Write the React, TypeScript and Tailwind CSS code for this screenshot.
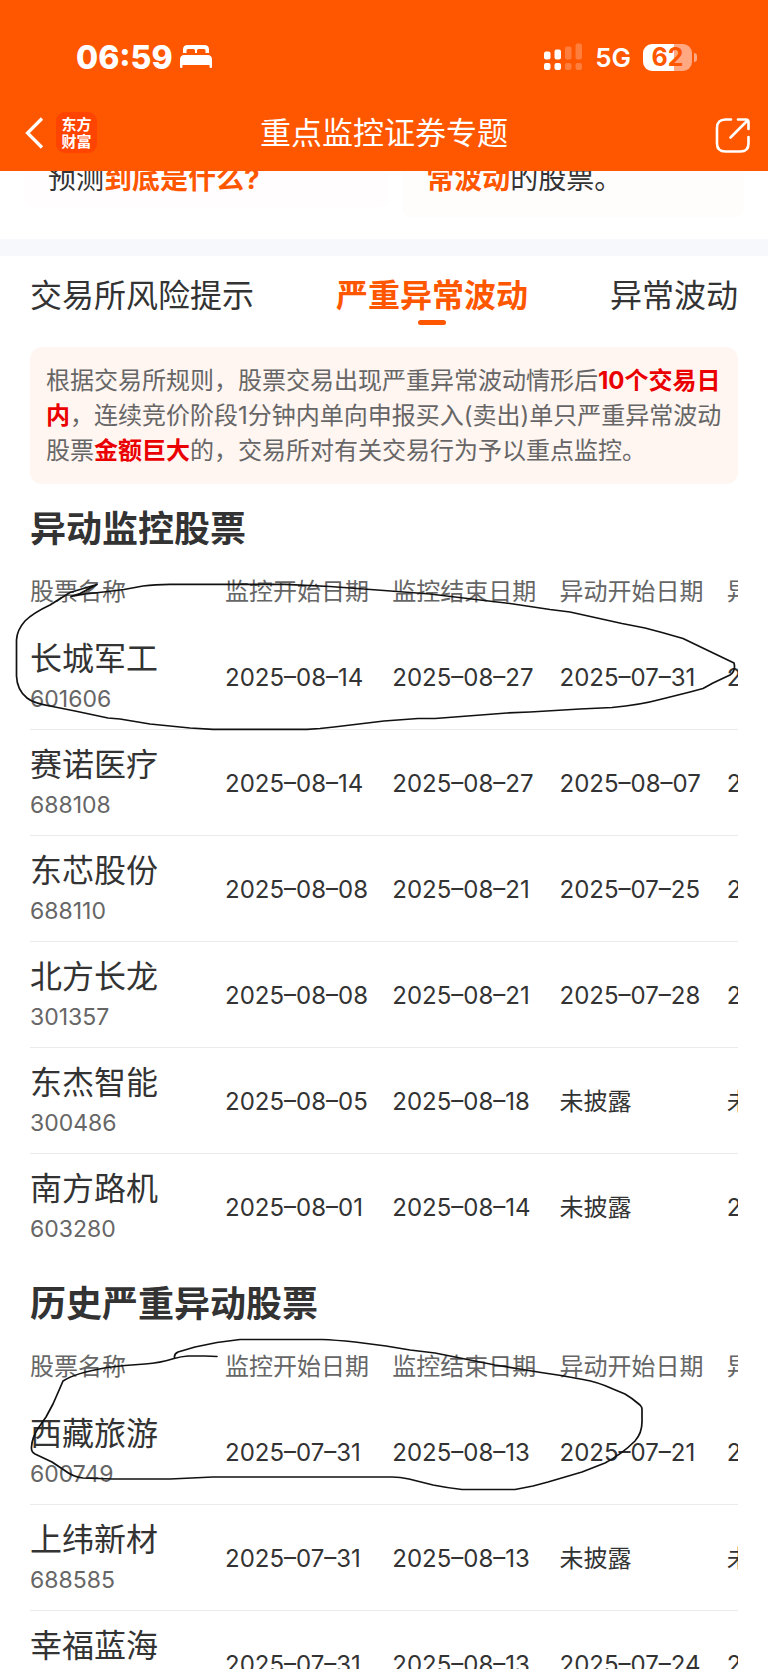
type Stock = {
  name: string;
  code: string;
  dates: [string, string, string, string];
};

const monitored: Stock[] = [
  { name: "长城军工", code: "601606", dates: ["2025–08–14", "2025–08–27", "2025–07–31", "2025–08–13"] },
  { name: "赛诺医疗", code: "688108", dates: ["2025–08–14", "2025–08–27", "2025–08–07", "2025–08–13"] },
  { name: "东芯股份", code: "688110", dates: ["2025–08–08", "2025–08–21", "2025–07–25", "2025–08–07"] },
  { name: "北方长龙", code: "301357", dates: ["2025–08–08", "2025–08–21", "2025–07–28", "2025–08–07"] },
  { name: "东杰智能", code: "300486", dates: ["2025–08–05", "2025–08–18", "未披露", "未披露"] },
  { name: "南方路机", code: "603280", dates: ["2025–08–01", "2025–08–14", "未披露", "2025–07–31"] },
];

const history: Stock[] = [
  { name: "西藏旅游", code: "600749", dates: ["2025–07–31", "2025–08–13", "2025–07–21", "2025–07–30"] },
  { name: "上纬新材", code: "688585", dates: ["2025–07–31", "2025–08–13", "未披露", "未披露"] },
  { name: "幸福蓝海", code: "300528", dates: ["2025–07–31", "2025–08–13", "2025–07–24", "2025–07–30"] },
];

const dateColumns = ["监控开始日期", "监控结束日期", "异动开始日期", "异动结束日期"];

function StatusBar() {
  return (
    <div className="flex h-[114px] items-center justify-between pl-[76px] pr-[71px]">
      <div className="flex items-center gap-1.5">
        <span className="pt-0.5 text-[32px] leading-10 font-extrabold">06:59</span>
        <svg width="34" height="26" viewBox="0 0 34 26" fill="currentColor" aria-hidden="true">
          <path d="M4 9V5.5Q4 1 8.500 1H25.500Q30 1 30 5.500V9H26.500V6.500Q26.500 5 25 5H19.500Q18 5 18 6.500V9H16V6.500Q16 5 14.500 5H9Q7.500 5 7.500 6.500V9Z" />
          <path d="M1 15.500Q1 11 5.500 11H28.500Q33 11 33 15.500V23Q33 24 32 24H31.500Q30.500 24 30.500 23V21H3.500V23Q3.500 24 2.500 24H2Q1 24 1 23Z" />
        </svg>
      </div>
      <div className="flex items-center gap-3">
        <svg width="39" height="28" viewBox="0 0 39 28" fill="currentColor" aria-hidden="true">
          <rect x="0" y="8.500" width="6.500" height="8" rx="2" />
          <rect x="10.500" y="6.500" width="6.500" height="10" rx="2" />
          <rect x="0" y="20" width="6.500" height="7" rx="2" />
          <rect x="10.500" y="20" width="6.500" height="7" rx="2" />
          <g opacity="0.24">
            <rect x="21" y="3.500" width="6.500" height="13" rx="2" />
            <rect x="31.500" y="0.500" width="6.500" height="16" rx="2" />
            <rect x="21" y="20" width="6.500" height="7" rx="2" />
            <rect x="31.500" y="20" width="6.500" height="7" rx="2" />
          </g>
        </svg>
        <span className="pt-0.5 text-[26px] leading-8 font-semibold">5G</span>
        <div className="flex items-center gap-0.5">
          <div className="flex h-[27px] w-[49px] items-center justify-center rounded-[9px] bg-linear-to-r from-white from-63% to-[#ffa882] to-63% text-[25px] leading-7 font-bold text-[#ff5600]">
            62
          </div>
          <div className="h-[9px] w-[3px] rounded-r-full bg-[#ffa882]" />
        </div>
      </div>
    </div>
  );
}

function NavBar() {
  return (
    <div className="grid h-[57px] grid-cols-[1fr_auto_1fr] items-start px-4">
      <div className="-mt-0.5 flex items-center gap-2.5 pl-2">
        <button type="button" aria-label="返回" className="py-1">
          <svg width="22" height="32" viewBox="0 0 22 32" fill="none" stroke="currentColor" strokeWidth="3.200" aria-hidden="true">
            <path d="M18 1.500L3.500 16L18 30.500" />
          </svg>
        </button>
        <a
          href="#home"
          className="flex size-[41px] flex-col items-center justify-center rounded-[9px] bg-[#ff4400] text-[15px] leading-[17px] font-bold"
        >
          <span>东方</span>
          <span>财富</span>
        </a>
      </div>
      <h1 className="text-[31px] leading-[38px]">重点监控证券专题</h1>
      <button type="button" aria-label="分享" className="justify-self-end pt-0.5">
        <svg width="38" height="38" viewBox="0 0 38 38" fill="none" stroke="currentColor" strokeWidth="2.600" strokeLinecap="round" aria-hidden="true">
          <path d="M17 3.500H11.500Q3 3.500 3 12V27.500Q3 35.500 11.500 35.500H26.500Q34.500 35.500 34.500 27.500V21" />
          <path d="M24 3.500H32Q34.500 3.500 34.500 6V13M33.500 4.500L16.500 21.500" />
        </svg>
      </button>
    </div>
  );
}

function StockTable({ title, stocks }: { title: string; stocks: Stock[] }) {
  return (
    <section>
      <h2 className="text-4xl leading-12 font-bold text-[#333]">{title}</h2>
      <div className="overflow-hidden">
        <table className="w-[864px] table-fixed border-separate border-spacing-0 text-left" aria-label={title}>
          <thead>
            <tr className="h-[71px] text-2xl text-[#666]">
              <th scope="col" className="w-[195px] pt-1.5 font-normal">
                股票名称
              </th>
              {dateColumns.map((label) => (
                <th key={label} scope="col" className="pt-1.5 font-normal whitespace-nowrap">
                  {label}
                </th>
              ))}
            </tr>
          </thead>
          <tbody>
            {stocks.map((stock) => (
              <tr key={stock.code} className="group h-[106px]">
                <th scope="row" className="border-b border-[#ebebeb] pt-1 font-normal group-last:border-b-0">
                  <div className="text-[32px] leading-10 text-[#333]">{stock.name}</div>
                  <div className="text-[23px] leading-10 text-[#666]">{stock.code}</div>
                </th>
                {stock.dates.map((date, i) => (
                  <td
                    key={dateColumns[i]}
                    className="border-b border-[#ebebeb] pt-0.5 text-2xl whitespace-nowrap text-[#333] group-last:border-b-0"
                  >
                    {date}
                  </td>
                ))}
              </tr>
            ))}
          </tbody>
        </table>
      </div>
    </section>
  );
}

function PenMarks() {
  return (
    <svg
      className="pointer-events-none absolute top-0 left-0"
      width="768"
      height="1669"
      viewBox="0 0 768 1669"
      fill="none"
      stroke="#111"
      strokeWidth="1.700"
      strokeLinejoin="round"
      strokeLinecap="round"
      aria-hidden="true"
    >
      <path d="M71 596.500L80 593.500L97 584.500L85 588L70 592.500L50 605Q33 613 25 621Q17 630 16.500 640V676Q17 690 27 698Q33 703 50 706L75 711L108 718L120 719L150 724L190 728L213 729.300H307L320 728.500L334 727L384 721L418 718.500H435L507 713L530 712L580 709L612 707.500Q640 705 662 699L676 695.500L690 692L703 688.500L713 683L730 675Q736 671 734 663L709 651L683 638.500L662 632.500L645 628L622 623.500L570 612L550 609.500L510 603.500L480 600L430 594L384 590.500L330 586.500L285 584.300H170Q155 584.300 143 586L124 589.500L108 591.500L85 594L71 596.500" />
      <path d="M217 1356.500L205 1356H188Q181 1356.500 174 1358.500Q160 1363 145 1364L125 1365.500L107 1367.500Q75 1373 63 1381L60 1388L53 1404L46 1417L39 1427Q32 1437 31.500 1447Q31 1452 35 1454L52 1462L64 1470Q73 1477 83 1478L113 1479H170L213 1477H392Q400 1477 409 1479L433 1485Q448 1488 462 1489.500H515L533 1486L548 1482L582 1472L605 1463Q622 1454 635 1441Q642 1433 642 1422V1409Q642 1407 640 1405Q632 1398 625 1394L613 1389Q598 1382 583 1379.500L561 1375.500L541 1372.500L495 1365L475 1361L435 1353L410 1350L386 1346L355 1342Q335 1340 322 1339.500H240L217 1342.500L195 1347L178 1352Q174 1354 174.500 1357.500" />
    </svg>
  );
}

export default function App() {
  return (
    <div className="relative flex h-screen flex-col overflow-hidden bg-white font-['Inter','Noto_Sans_CJK_SC',sans-serif] text-[#333]">
      <header className="shrink-0 bg-[#ff5600] text-white">
        <StatusBar />
        <NavBar />
      </header>

      <main className="min-h-0 flex-1 overflow-hidden">
        <div className="-mt-3 flex items-start gap-3.5 px-6 text-[28px] leading-10">
          <p className="flex-[366_1_0%] rounded-b-lg bg-[#fffdfd] px-6 pb-2">
            预测<strong className="text-[#ff5600]">到底是什么?</strong>
          </p>
          <p className="flex-[340_1_0%] rounded-b-lg bg-[#fffcfc] px-6 pb-[18px]">
            <strong className="text-[#ff5600]">常波动</strong>的股票。
          </p>
        </div>
        <div className="mt-[22px] h-[17px] bg-[#f7f8fb]" />

        <div className="px-[30px] pt-5">
          <nav className="flex h-[49px] items-start justify-between text-[32px] leading-10" aria-label="异动类型">
            <button type="button">交易所风险提示</button>
            <button type="button" aria-current="page" className="flex flex-col items-center gap-1 font-bold text-[#ff5600]">
              严重异常波动
              <span className="h-[5px] w-7 rounded-full bg-[#ff5600]" />
            </button>
            <button type="button">异常波动</button>
          </nav>

          <p className="mt-[22px] rounded-xl bg-[#fff5f1] py-4 pr-3 pl-4 text-2xl leading-[35px] text-[#666]">
            根据交易所规则，股票交易出现严重异常波动情形后<strong className="text-[#ea0000]">10个交易日内</strong>
            ，连续竞价阶段1分钟内单向申报买入(卖出)单只严重异常波动股票
            <strong className="text-[#ea0000]">金额巨大</strong>的，交易所对有关交易行为予以重点监控。
          </p>

          <div className="mt-[21px] flex flex-col gap-5">
            <StockTable title="异动监控股票" stocks={monitored} />
            <StockTable title="历史严重异动股票" stocks={history} />
          </div>
        </div>
      </main>

      <PenMarks />
    </div>
  );
}
